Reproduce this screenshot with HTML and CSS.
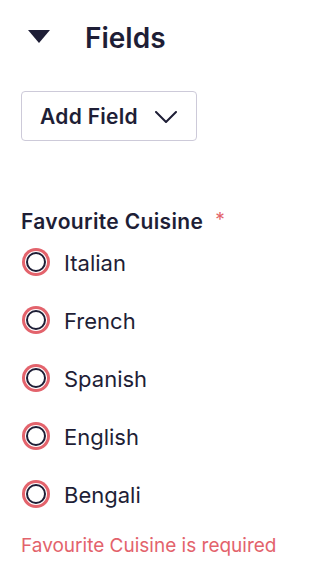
FILE: index.html
```html
<!DOCTYPE html>
<html lang="en">
<head>
<meta charset="utf-8">
<title>Fields</title>
<link rel="stylesheet" href="styles.css">
</head>
<body>
<div class="panel">
  <div class="section-head">
    <svg class="caret" width="22" height="13" viewBox="0 0 22 13" aria-hidden="true"><path d="M0 0H22L11 13Z" fill="#1e1e36"/></svg>
    <h2 class="section-title">Fields</h2>
  </div>
  <button class="add-btn" type="button">
    <span class="add-text">Add Field</span>
    <svg class="chev" width="22" height="12" viewBox="0 0 22 12" aria-hidden="true"><path d="M1 1L11 11L21 1" fill="none" stroke="#1e1e36" stroke-width="2" stroke-linecap="round" stroke-linejoin="round"/></svg>
  </button>
  <fieldset class="field">
    <legend class="field-label">Favourite Cuisine<span class="req">*</span></legend>
    <div class="options">
      <label class="option"><span class="radio"></span><span class="opt-text">Italian</span></label>
      <label class="option"><span class="radio"></span><span class="opt-text">French</span></label>
      <label class="option"><span class="radio"></span><span class="opt-text">Spanish</span></label>
      <label class="option"><span class="radio"></span><span class="opt-text">English</span></label>
      <label class="option"><span class="radio"></span><span class="opt-text">Bengali</span></label>
    </div>
    <p class="error">Favourite Cuisine is required</p>
  </fieldset>
</div>
</body>
</html>
```
FILE: styles.css
```css
html, body {
  margin: 0;
  padding: 0;
  background: #ffffff;
}
body {
  font-family: Inter, "Noto Sans", sans-serif;
  color: #1e1e36;
}
.panel {
  padding: 18px 0 0 21px;
  display: flex;
  flex-direction: column;
  align-items: flex-start;
}
.section-head {
  display: flex;
  align-items: center;
  height: 40px;
}
.caret {
  margin-left: 7px;
  margin-right: 35px;
  margin-top: -3px;
}
.section-title {
  margin: 0;
  font-size: 28px;
  line-height: 40px;
  font-weight: 600;
}
.add-btn {
  margin-top: 33px;
  box-sizing: border-box;
  height: 50px;
  width: 176px;
  display: flex;
  align-items: center;
  padding: 0 19px 0 18px;
  gap: 17px;
  background: #fff;
  border: 1px solid #cdcad9;
  border-radius: 4px;
  font-family: inherit;
  font-size: 21px;
  font-weight: 600;
  letter-spacing: 0.3px;
  color: #1e1e36;
  white-space: nowrap;
}
.add-text {
  white-space: nowrap;
}
.chev {
  margin-top: 2px;
  flex: none;
}
.field {
  border: 0;
  margin: 68px 0 0;
  padding: 0;
  min-width: 0;
}
.field-label {
  padding: 0;
  font-size: 21px;
  line-height: 26px;
  font-weight: 600;
  letter-spacing: 0.35px;
}
.req {
  color: #e3636c;
  font-weight: 400;
  font-size: 19px;
  margin-left: 12px;
  vertical-align: top;
  line-height: 22px;
}
.options {
  margin-top: 12.6px;
  display: flex;
  flex-direction: column;
  gap: 30px;
}
.option {
  display: flex;
  align-items: center;
  height: 28px;
}
.radio {
  box-sizing: border-box;
  width: 20px;
  height: 20px;
  margin-left: 5px;
  border: 2px solid #1e1e36;
  border-radius: 50%;
  background: #fff;
  box-shadow: 0 0 0 1px #fff, 0 0 0 4px #e3636c;
}
.opt-text {
  margin-left: 18px;
  font-size: 22px;
  line-height: 28px;
  padding-top: 3px;
}
.error {
  margin: 26px 0 0;
  font-size: 19px;
  line-height: 24px;
  color: #e3636c;
}
```
